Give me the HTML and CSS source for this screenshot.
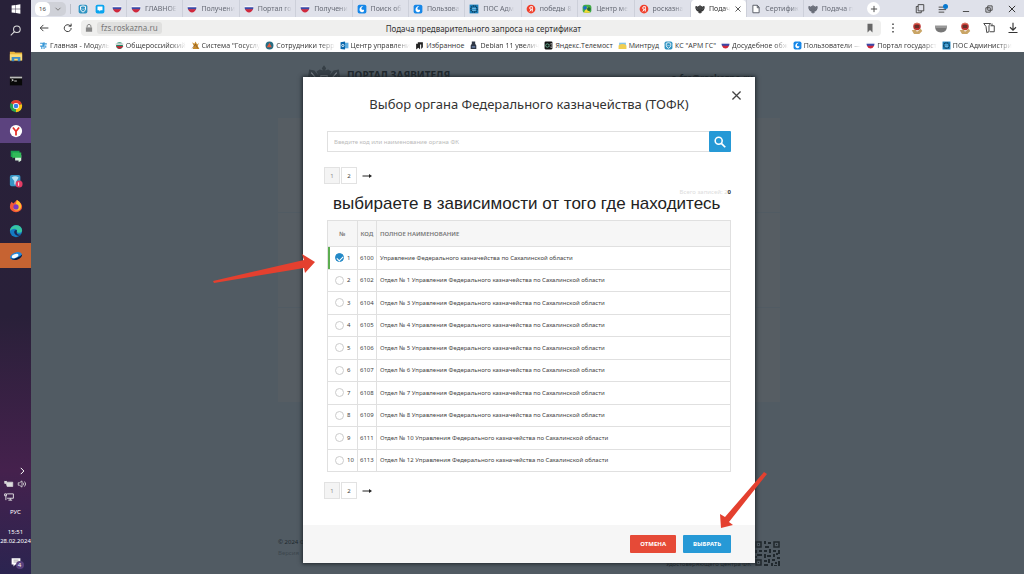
FILE: index.html
```html
<!DOCTYPE html>
<html lang="ru">
<head>
    <meta charset="UTF-8">
    <meta name="viewport" content="width=device-width, initial-scale=1.0">
    <title>Подача предварительного запроса на сертификат</title>
    <link rel="stylesheet" href="styles.css">
</head>
<body>
    <svg class="sprite" aria-hidden="true">
        <symbol id="flag" viewBox="0 0 16 16">
            <path d="M1 3h14v3H1z" fill="#f4f4f8"/>
            <path d="M1 5h14q0 2-1 4H2Q1 7 1 5z" fill="#3b4aa8"/>
            <path d="M1.600 8.500h12.800q-2 5-6.400 5t-6.400-5z" fill="#d0283c"/>
        </symbol>
        <symbol id="wave" viewBox="0 0 16 16">
            <rect x="1" y="1" width="14" height="14" rx="3" fill="#1687e8"/>
            <path d="M10 3c-4 0-6 3-6 6 0 2 2 4 4 4 3 0 4-3 3-4-2 1-4 0-4-2s2-3 3-4z" fill="#fff"/>
        </symbol>
        <symbol id="gear" viewBox="0 0 16 16">
            <rect x="1" y="1" width="14" height="14" fill="#1a81bd"/>
            <circle cx="8" cy="8" r="5" fill="none" stroke="#10364f" stroke-width="2" stroke-dasharray="2 1"/>
            <path d="M5 7h6M5 10h6" stroke="#bfe4f7"/>
        </symbol>
        <symbol id="ya" viewBox="0 0 16 16">
            <circle cx="8" cy="8" r="7" fill="#f0402c"/>
            <path d="M10 12V4H8.500Q6 4 6 6.300T8.500 9H10M8 9l-2 3" fill="none" stroke="#fff" stroke-width="1.600"/>
        </symbol>
        <symbol id="eagle" viewBox="0 0 32 32">
            <path d="M16 2l2 3-1 2 3-1 3 2-2 4 4-5 5-1 1 7-3 7-5 4-3 1 2 4-4-1-2 4-2-4-4 1 2-4-3-1-5-4-3-7 1-7 5 1 4 5-2-4 3-2 3 1-1-2z" fill="currentColor"/>
            <path d="M4 9l6 7M3 13l7 6M28 9l-6 7M29 13l-7 6M13 12h6v6l-3 3-3-3z" fill="none" stroke="#8a9097"/>
        </symbol>
        <symbol id="shield" viewBox="0 0 16 16">
            <rect x="1" y="1" width="14" height="14" rx="3" fill="#2f93c2"/>
            <path d="M8 3l4 1v4q0 3-4 5-4-2-4-5V4z" fill="none" stroke="#fff" stroke-width="1.500"/>
            <path d="M6 7l2 2 2-2" fill="none" stroke="#fff"/>
        </symbol>
        <symbol id="chat" viewBox="0 0 16 16">
            <rect x="1" y="1" width="14" height="14" rx="3" fill="#09a4ef"/>
            <path d="M4 4h8v6H9l-2 2v-2H4z" fill="#fff"/>
        </symbol>
        <symbol id="map" viewBox="0 0 16 16">
            <rect x="1" y="1" width="14" height="13" rx="4" fill="#42ad48"/>
            <path d="M3 14l5-10 5 10z" fill="#f5d936"/>
            <circle cx="5" cy="6" r="3" fill="#1c6ecb"/><circle cx="11" cy="8" r="3" fill="#216b32"/>
        </symbol>
        <symbol id="page" viewBox="0 0 16 16">
            <path d="M3 2h7l3 3v9H3zM10 2v4h3" fill="#fff" stroke="#565b64" stroke-width="1.500"/>
        </symbol>
        <symbol id="lens" viewBox="0 0 16 16">
            <circle cx="6.500" cy="6.500" r="4" fill="none" stroke="currentColor" stroke-width="1.800"/>
            <path d="M9.500 9.500l4.500 4.500" stroke="currentColor" stroke-width="2"/>
        </symbol>
        <symbol id="close" viewBox="0 0 16 16">
            <path d="M3 3l10 10M13 3L3 13" stroke="currentColor" stroke-width="1.600"/>
        </symbol>
        <symbol id="arrow" viewBox="0 0 20 8">
            <path d="M1 4h15" stroke="#222" stroke-width="2"/>
            <path d="M14 0l6 4-6 4z" fill="#222"/>
        </symbol>
        <symbol id="medal" viewBox="0 0 16 16">
            <circle cx="8" cy="6" r="5" fill="#be3030"/>
            <path d="M5 4h6v4H5z" fill="#68302a"/>
            <path d="M1 11l5-1 2 3 5-4 2 3-4 4H4z" fill="#c9a566"/>
            <path d="M4 3q4-3 8 0" fill="none" stroke="#e49a7b"/>
        </symbol>
    </svg>

    <nav class="taskbar" aria-label="Панель задач">
        <div class="task-list">
            <button class="task" aria-label="Пуск"><svg viewBox="0 0 16 16"><path d="M3 4l4.500-.6V7.600H3zM8 3.300l5-.8v5.100H8zM3 8.200h4.500v4.300L3 12zM8 8.200h5v5.200l-5-.8z" fill="#fff"/></svg></button>
            <button class="task" aria-label="Поиск"><svg viewBox="0 0 16 16"><circle cx="9" cy="6" r="3.800" fill="none" stroke="#ddd" stroke-width="1.200"/><path d="M6 9l-4 4" stroke="#ddd" stroke-width="1.200"/></svg></button>
            <button class="task" aria-label="Проводник"><svg viewBox="0 0 16 16"><path d="M1 3h5l1 1h8v9H1z" fill="#e9b53a"/><path d="M1 6h14v7H1z" fill="#fadb74"/><path d="M3 9h10v5h-3v-3H6v3H3z" fill="#3e8dc6"/></svg></button>
            <button class="task" aria-label="Командная строка"><svg viewBox="0 0 16 16"><path d="M1 3h14v10H1z" fill="#080808"/><path d="M1 3h14v2H1z" fill="#bbb"/><path d="M3 6l2 1-2 1M6 8h3" stroke="#ddd" fill="none"/></svg></button>
            <button class="task" aria-label="Chrome"><svg viewBox="0 0 16 16"><circle cx="8" cy="8" r="7" fill="#2ba24c"/><path d="M8 8L2 4.500A7 7 0 0 1 14.700 6z" fill="#e33b2e"/><path d="M8 8l6.700-2A7 7 0 0 1 8 15z" fill="#fbc116"/><circle cx="8" cy="8" r="3.500" fill="#fff"/><circle cx="8" cy="8" r="2.700" fill="#357de8"/></svg></button>
            <button class="task task-active" aria-label="Яндекс Браузер"><svg viewBox="0 0 16 16"><circle cx="8" cy="8" r="7" fill="#fff"/><path d="M4.500 4L8 8.500 11.500 4M8 8v5" fill="none" stroke="#e52e28" stroke-width="2"/></svg></button>
            <button class="task" aria-label="Сообщения"><svg viewBox="0 0 16 16"><path d="M7 7h7v6l-3 2v-2H7z" fill="#d6f0dc"/><path d="M2 2h10v7H6l-2 2V9H2z" fill="#1b9f50"/><path d="M4 4h10v6H4z" fill="#31bb58"/></svg></button>
            <button class="task" aria-label="Сервис"><svg viewBox="0 0 16 16"><rect x="1" y="1" width="12" height="13" rx="2" fill="#3796c5"/><path d="M3 4q4-3 8 0L8 9v3H6V8z" fill="#b8e1f0"/><circle cx="11.500" cy="11.500" r="4" fill="#e43c65"/><path d="M11 9.500v4" stroke="#fff"/></svg></button>
            <button class="task" aria-label="Firefox"><svg viewBox="0 0 16 16"><path d="M3 3l2 2 4-4c4 2 6 5 6 8a7 6 0 0 1-14 0q0-4 2-6z" fill="#f45939"/><path d="M9 1c5 3 6 7 4 10-2 3-6 3-8 0l3-6z" fill="#ffc22e"/><circle cx="8" cy="9" r="3" fill="#7b3ac3"/></svg></button>
            <button class="task" aria-label="Edge"><svg viewBox="0 0 16 16"><circle cx="8" cy="8" r="7" fill="#147bc3"/><path d="M1 8C2 0 14-1 15 7c0 3-4 4-6 2 1-4-4-5-8-1z" fill="#37c5a2"/><path d="M9 7c-3-1-5 4 0 6 2 1 4 0 5-1-4 1-6-1-5-5z" fill="#1b2754"/></svg></button>
            <button class="task task-orange" aria-label="Просмотр"><svg viewBox="0 0 16 16"><ellipse cx="8" cy="8" rx="7" ry="4" transform="rotate(-20 8 8)" fill="#2389dc"/><path d="M1 10q3 2 8 0t6-4q0 4-5 6t-9-2z" fill="#071d43"/><ellipse cx="7" cy="8" rx="4" ry="2" transform="rotate(-20 7 8)" fill="#f5fbff"/></svg></button>
        </div>
        <div class="tray">
            <svg class="tray-more" viewBox="0 0 16 16"><path d="M6 3l5 5-5 5" fill="none" stroke="#fff" stroke-width="1.600"/></svg>
            <div class="tray-row">
                <svg viewBox="0 0 16 16"><path d="M3 5h11v7H5zM1 3v4h3V3" fill="#ddd" stroke="#ddd"/></svg>
                <svg viewBox="0 0 16 16"><path d="M2 6h2l4-3v10L4 10H2zM10 6q2 2 0 4M12 4q4 4 0 8" fill="none" stroke="#ddd" stroke-width="1.300"/></svg>
            </div>
            <svg class="tray-net" viewBox="0 0 16 16"><path d="M5 3h10v7H5M10 10v3M7 13h6M1 3h3v3H1zM3 6v7" fill="none" stroke="#eee" stroke-width="1.400"/></svg>
            <span class="lang">РУС</span>
            <time class="clock">15:51<br>28.02.2024</time>
            <div class="notify">
                <svg viewBox="0 0 16 16"><path d="M1 2h14v10H7l-3 3v-3H1z" fill="#fff"/><path d="M4 5h8M4 8h8" stroke="#777"/></svg>
                <span>4</span>
            </div>
        </div>
    </nav>

    <div class="browser">
        <header class="chrome">
            <div class="tabbar">
                <div class="tab-count"><b>16</b><svg viewBox="0 0 16 16"><path d="M4 6l4 4 4-4" fill="none" stroke="#777" stroke-width="1.500"/></svg></div>
                <div class="pinned">
                    <svg><use href="#shield"/></svg>
                    <svg><use href="#chat"/></svg>
                    <svg><use href="#flag"/></svg>
                </div>
                <div class="tabs">
                    <a class="tab" href="#"><svg><use href="#flag"/></svg><span>ГЛАВНОЕ</span></a>
                    <a class="tab" href="#"><svg><use href="#flag"/></svg><span>Получени</span></a>
                    <a class="tab" href="#"><svg><use href="#flag"/></svg><span>Портал го</span></a>
                    <a class="tab" href="#"><svg><use href="#flag"/></svg><span>Получени</span></a>
                    <a class="tab" href="#"><svg><use href="#wave"/></svg><span>Поиск об</span></a>
                    <a class="tab" href="#"><svg><use href="#wave"/></svg><span>Пользова</span></a>
                    <a class="tab" href="#"><svg><use href="#gear"/></svg><span>ПОС Адм</span></a>
                    <a class="tab" href="#"><svg><use href="#ya"/></svg><span>победы 8</span></a>
                    <a class="tab" href="#"><svg><use href="#map"/></svg><span>Центр ме</span></a>
                    <a class="tab" href="#"><svg><use href="#ya"/></svg><span>росказна</span></a>
                    <a class="tab tab-current" href="#"><svg><use href="#eagle"/></svg><span>Подач</span><svg class="tab-close"><use href="#close"/></svg></a>
                    <a class="tab" href="#"><svg><use href="#page"/></svg><span>Сертифик</span></a>
                    <a class="tab" href="#"><svg><use href="#eagle"/></svg><span>Подача п</span></a>
                </div>
                <button class="new-tab" aria-label="Новая вкладка"><svg viewBox="0 0 16 16"><path d="M8 3v10M3 8h10" stroke="#444" stroke-width="1.500"/></svg></button>
                <div class="window-buttons">
                    <button aria-label="Копии"><svg viewBox="0 0 16 16"><path d="M5 1h9v10H5zM5 4H2v10h8v-3" fill="none" stroke="#444" stroke-width="1.500"/></svg></button>
                    <button aria-label="Меню"><svg viewBox="0 0 16 16"><path d="M1 5h8M1 9h12M1 13h9" stroke="#444" stroke-width="1.500"/><circle cx="12" cy="4" r="4" fill="#0879cf"/></svg></button>
                    <button aria-label="Свернуть"><svg viewBox="0 0 16 16"><path d="M3 12h10" stroke="#444" stroke-width="1.500"/></svg></button>
                    <button aria-label="Развернуть"><svg viewBox="0 0 16 16"><path d="M6 3h7v7H6zM3 6h7v7H3z" fill="none" stroke="#444" stroke-width="1.500"/></svg></button>
                    <button aria-label="Закрыть окно"><svg><use href="#close"/></svg></button>
                </div>
            </div>

            <div class="address-row">
                <button aria-label="Назад"><svg viewBox="0 0 16 16"><path d="M15 8H2M7 3L2 8l5 5" fill="none" stroke="#333" stroke-width="1.500"/></svg></button>
                <button aria-label="Обновить"><svg viewBox="0 0 16 16"><path d="M13 8a5.500 5.500 0 1 1-2-4l2 1M13 1v4H9" fill="none" stroke="#333" stroke-width="1.500"/></svg></button>
                <div class="address">
                    <svg class="lock" viewBox="0 0 16 16"><path d="M3 7h10v7H3z" fill="#888"/><path d="M5 7V4q3-4 6 0v3" fill="none" stroke="#888" stroke-width="1.600"/></svg>
                    <span class="host">fzs.roskazna.ru</span>
                    <span class="page-title">Подача предварительного запроса на сертификат</span>
                    <svg class="mark" viewBox="0 0 16 16"><path d="M4 1h8v14l-4-4-4 4z" fill="#666"/></svg>
                </div>
                <div class="tools">
                    <button aria-label="Ещё"><svg viewBox="0 0 16 16"><path d="M8 2v2M8 7v2M8 12v2" stroke="#444" stroke-width="2"/></svg></button>
                    <button aria-label="Расширение 1"><svg><use href="#medal"/></svg></button>
                    <button aria-label="Расширение 2"><svg viewBox="0 0 16 16"><path d="M0 5h16q0 9-8 9T0 5z" fill="#777"/><path d="M0 5h16v3H0z" fill="#999"/></svg></button>
                    <button aria-label="Расширение 3"><svg><use href="#medal"/></svg></button>
                    <button aria-label="Коллекции"><svg viewBox="0 0 16 16"><path d="M1 2h9l-2 3v8L5 14 4 6zM10 5h5v8H9M12 2v3" fill="none" stroke="#444" stroke-width="1.300"/></svg></button>
                    <button aria-label="Загрузки"><svg viewBox="0 0 16 16"><path d="M8 1v9M4 7l4 4 4-4M2 14h12" fill="none" stroke="#333" stroke-width="1.500"/></svg></button>
                </div>
            </div>

            <nav class="bookmarks" aria-label="Закладки">
                <a href="#"><svg viewBox="0 0 16 16"><path d="M2 4h5v5H2M9 2v12M9 5h5M5 9v5M12 8v4" fill="none" stroke="#3998d7" stroke-width="2"/></svg><span class="fade">Главная - Модуль</span></a>
                <a href="#"><svg viewBox="0 0 16 16"><circle cx="8" cy="8" r="6" fill="#1c8b6b"/><path d="M1 4h14v3H1z" fill="#ddd"/><path d="M2 9h13q-3 5-7 5T2 9z" fill="#b92e38"/></svg><span class="fade">Общероссийский</span></a>
                <a href="#"><svg viewBox="0 0 16 16"><path d="M2 2l4 3 2-4 3 5 3-3-2 6 3 5H3l2-5z" fill="#c68b2c"/><path d="M2 13l6-7 4 7" stroke="#6f4421" fill="none"/></svg><span class="fade">Система "Госуслу</span></a>
                <a href="#"><svg viewBox="0 0 16 16"><circle cx="8" cy="8" r="7" fill="#276d84"/><path d="M3 11l5-8 4 8z" fill="#e15a3e"/></svg><span class="fade">Сотрудники терр</span></a>
                <a href="#"><svg viewBox="0 0 16 16"><path d="M6 3h9v10H6z" fill="#5eade0"/><path d="M1 2l8-1v14l-8-1z" fill="#0767ad"/><circle cx="5" cy="8" r="2" fill="none" stroke="#fff" stroke-width="1.500"/></svg><span class="fade">Центр управлени</span></a>
                <a href="#"><svg viewBox="0 0 16 16"><path d="M5 2h9v9l-3 3V6H5zM2 5h7v10l-3-3-4 3z" fill="#222"/></svg><span>Избранное</span></a>
                <a href="#"><svg viewBox="0 0 16 16"><path d="M5 1h6v4l2 3v6H3V8l2-3z" fill="#303846"/><path d="M5 9h6v3H5z" fill="#657aa0"/></svg><span class="fade">Debian 11 увелич</span></a>
                <a href="#"><svg viewBox="0 0 16 16"><rect x="1" y="1" width="14" height="14" rx="2" fill="#111"/><circle cx="6" cy="8" r="3" fill="none" stroke="#69ba9d" stroke-width="1.500"/><path d="M10 6l4-2v8l-4-2" fill="none" stroke="#ddd"/></svg><span>Яндекс.Телемост</span></a>
                <a href="#"><svg viewBox="0 0 16 16"><path d="M2 3h12v9H2z" fill="#86c3e6"/><path d="M1 8q7-5 14 0v6H1z" fill="#f0ce51"/></svg><span>Минтруд</span></a>
                <a href="#"><svg><use href="#shield"/></svg><span>КС "АРМ ГС"</span></a>
                <a href="#"><svg><use href="#flag"/></svg><span class="fade">Досудебное обж</span></a>
                <a href="#"><svg><use href="#wave"/></svg><span class="fade">Пользователи —</span></a>
                <a href="#"><svg><use href="#flag"/></svg><span class="fade">Портал государст</span></a>
                <a href="#"><svg><use href="#gear"/></svg><span class="fade">ПОС Администри</span></a>
            </nav>
        </header>

        <main class="viewport">
            <div class="portal">
                <div class="portal-head">
                    <svg><use href="#eagle"/></svg>
                    <strong>ПОРТАЛ ЗАЯВИТЕЛЯ</strong>
                    <strong class="portal-mail">e-fzs@roskazna.ru</strong>
                </div>
                <div class="portal-cards">
                    <section></section>
                    <section></section>
                    <section></section>
                </div>
                <footer class="portal-foot">
                    <div><p>© 2024 Федеральное казначейство</p><p class="dim">Версия</p></div>
                    <p class="qr-note">Удостоверяющего центра ФК</p>
                    <svg class="qr" viewBox="0 0 25 25"><path d="M1 1h5v5H1zM19 1h5v5h-5zM1 19h5v5H1z" fill="none" stroke="#20282d" stroke-width="1.500"/><path d="M3 3h1v1H3zM21 3h1v1h-1zM3 21h1v1H3zM9 0h2v3H9zM13 1h3v2h-3zM10 5h4v2h-4zM9 9h3v2H9zM14 8h2v4h-2zM0 9h2v3H0zM4 9h3v2H4zM2 13h5v2H2zM0 15h2v2H0zM9 13h2v4H9zM12 14h4v2h-4zM18 9h3v2h-3zM23 9h2v4h-2zM18 13h2v3h-2zM21 12h2v2h-2zM22 16h3v2h-3zM9 19h3v2H9zM13 18h2v4h-2zM9 23h4v2H9zM17 18h3v2h-3zM16 22h2v3h-2zM20 21h2v2h-2zM23 20h2v5h-2zM19 24h3v1h-3z" fill="#20282d"/></svg>
                </footer>
            </div>

            <div class="overlay">
                <div class="modal" role="dialog" aria-labelledby="modalTitle">
                    <button class="modal-close" aria-label="Закрыть"><svg><use href="#close"/></svg></button>
                    <div class="modal-body">
                        <h1 id="modalTitle">Выбор органа Федерального казначейства (ТОФК)</h1>
                        <form class="search">
                            <input type="text" aria-label="Поиск органа" placeholder="Введите код или наименование органа ФК">
                            <button type="button" aria-label="Найти"><svg><use href="#lens"/></svg></button>
                        </form>
                        <div class="pager">
                            <button class="on">1</button>
                            <button>2</button>
                            <a href="#" aria-label="Вперёд"><svg><use href="#arrow"/></svg></a>
                        </div>
                        <p class="total"><span>Всего записей: 2</span><b>0</b></p>
                        <p class="note">выбираете в зависимости от того где находитесь</p>
                        <table class="organs">
                            <thead>
                                <tr><th class="num">№</th><th class="code">КОД</th><th>ПОЛНОЕ НАИМЕНОВАНИЕ</th></tr>
                            </thead>
                            <tbody>
                                <tr class="selected"><td><label><input type="radio" name="organ" checked>1</label></td><td class="code">6100</td><td>Управление Федерального казначейства по Сахалинской области</td></tr>
                                <tr><td><label><input type="radio" name="organ">2</label></td><td class="code">6102</td><td>Отдел № 1 Управления Федерального казначейства по Сахалинской области</td></tr>
                                <tr><td><label><input type="radio" name="organ">3</label></td><td class="code">6104</td><td>Отдел № 3 Управления Федерального казначейства по Сахалинской области</td></tr>
                                <tr><td><label><input type="radio" name="organ">4</label></td><td class="code">6105</td><td>Отдел № 4 Управления Федерального казначейства по Сахалинской области</td></tr>
                                <tr><td><label><input type="radio" name="organ">5</label></td><td class="code">6106</td><td>Отдел № 5 Управления Федерального казначейства по Сахалинской области</td></tr>
                                <tr><td><label><input type="radio" name="organ">6</label></td><td class="code">6107</td><td>Отдел № 6 Управления Федерального казначейства по Сахалинской области</td></tr>
                                <tr><td><label><input type="radio" name="organ">7</label></td><td class="code">6108</td><td>Отдел № 7 Управления Федерального казначейства по Сахалинской области</td></tr>
                                <tr><td><label><input type="radio" name="organ">8</label></td><td class="code">6109</td><td>Отдел № 8 Управления Федерального казначейства по Сахалинской области</td></tr>
                                <tr><td><label><input type="radio" name="organ">9</label></td><td class="code">6111</td><td>Отдел № 10 Управления Федерального казначейства по Сахалинской области</td></tr>
                                <tr><td><label><input type="radio" name="organ">10</label></td><td class="code">6113</td><td>Отдел № 12 Управления Федерального казначейства по Сахалинской области</td></tr>
                            </tbody>
                        </table>
                        <div class="pager pager-bottom">
                            <button class="on">1</button>
                            <button>2</button>
                            <a href="#" aria-label="Вперёд"><svg><use href="#arrow"/></svg></a>
                        </div>
                    </div>
                    <div class="modal-foot">
                        <button class="btn btn-red">ОТМЕНА</button>
                        <button class="btn btn-blue">ВЫБРАТЬ</button>
                    </div>
                    <svg class="pointer pointer-row" viewBox="0 0 102 30"><path d="M0 27L91 6 89 0l13 8-10 11-1-5L1 29z" fill="#e4402f"/></svg>
                    <svg class="pointer pointer-btn" viewBox="0 0 48 58"><path d="M45 1L6 46l-5-3 1 14 12-3-4-3L48 3z" fill="#e4402f"/></svg>
                </div>
            </div>
        </main>
    </div>
</body>
</html>
```
FILE: styles.css
```css
* {
    box-sizing: border-box;
}

body {
    margin: 0;
    display: flex;
    height: 100vh;
    overflow: hidden;
    font-family: "Noto Sans", "Open Sans", sans-serif;
    font-size: 6px;
    color: #444;
}

button {
    padding: 0;
    border: none;
    background: none;
    font: inherit;
    color: inherit;
    display: flex;
    align-items: center;
    justify-content: center;
    cursor: pointer;
}

a {
    color: inherit;
    text-decoration: none;
}

p {
    margin: 0;
}

svg {
    display: block;
    flex: none;
}

.sprite {
    position: absolute;
    width: 0;
    height: 0;
}

/* taskbar */
.taskbar {
    width: 31px;
    flex: none;
    display: flex;
    flex-direction: column;
    justify-content: space-between;
    background: linear-gradient(#282139, #292039 55%, #45214d 82%, #2b2450);
    color: #fff;
}

.task {
    width: 100%;
    height: 25px;
}

.task:first-child {
    height: 18px;
}

.task svg {
    width: 14px;
    height: 14px;
}

.task-active {
    background: #5c437f;
}

.task-orange {
    background: #c66332;
}

.tray {
    display: flex;
    flex-direction: column;
    align-items: center;
    padding-bottom: 7px;
}

.tray svg {
    width: 10px;
    height: 10px;
}

.tray-more {
    align-self: flex-end;
    margin-right: 4px;
}

.tray-row {
    display: flex;
    gap: 3px;
    margin-top: 3px;
}

.tray-net {
    align-self: flex-start;
    margin: 3px 0 5px 4px;
}

.lang {
    line-height: 10px;
}

.clock {
    margin-top: 11px;
    line-height: 9px;
    text-align: center;
}

.notify {
    position: relative;
    margin-top: 11px;
}

.notify span {
    position: absolute;
    left: 5px;
    top: 4px;
    width: 8px;
    height: 8px;
    border-radius: 50%;
    background: #59417e;
    line-height: 8px;
    text-align: center;
}

/* browser */
.browser {
    flex: 1;
    min-width: 0;
    display: flex;
    flex-direction: column;
}

.chrome {
    background: #fff;
    color: #333;
}

.tabbar {
    display: flex;
    align-items: center;
    height: 17px;
    padding: 0 7px 0 4px;
    background: #dfe1ea;
}

.tabbar svg {
    width: 10px;
    height: 10px;
}

.tab-count {
    display: flex;
    align-items: center;
    gap: 3px;
    height: 14px;
    padding-right: 3px;
    border-radius: 5px;
    background: #cfd1d8;
}

.tab-count b {
    width: 15px;
    line-height: 14px;
    border-radius: 5px;
    background: #fff;
    text-align: center;
    font-weight: 400;
}

.pinned {
    display: flex;
    gap: 7px;
    margin-left: 4px;
    padding: 0 4px 0 7px;
    border-left: 1px solid #bbbec8;
}

.tabs {
    flex: 1;
    min-width: 0;
    display: flex;
    height: 100%;
}

.tab {
    flex: 1 1 0;
    min-width: 0;
    display: flex;
    align-items: center;
    gap: 4px;
    padding: 0 0 0 4px;
    border-left: 1px solid #cdd0da;
    font-size: 7px;
    white-space: nowrap;
    color: #666a75;
}

.tab span,
.fade {
    mask-image: linear-gradient(90deg, #000 75%, transparent);
}

.tab-current {
    border-radius: 4px 4px 0 0;
    background: #fff;
    color: #333;
}

.tabbar .tab-close {
    width: 8px;
    height: 8px;
}

.new-tab {
    width: 13px;
    height: 13px;
    margin: 0 35px 0 8px;
    border-radius: 50%;
    background: #fff;
}

.window-buttons {
    display: flex;
    gap: 13px;
}

.address-row {
    display: flex;
    align-items: center;
    height: 22px;
    padding: 0 5px 0 8px;
    gap: 14px;
}

.address-row svg {
    width: 10px;
    height: 10px;
}

.address {
    flex: 1;
    display: flex;
    align-items: center;
    height: 16px;
    margin-left: -6px;
    padding: 0 6px 0 3px;
    border-radius: 4px;
    background: #efefee;
}

.host {
    margin-left: 3px;
    padding: 0 4px;
    border-radius: 3px;
    background: #e0e0df;
    font-size: 8px;
    line-height: 12px;
    color: #777;
}

.page-title {
    flex: 1;
    padding-right: 60px;
    font-size: 8px;
    text-align: center;
}

.address-row .tools {
    display: flex;
    gap: 12px;
    margin-left: -8px;
}

.tools svg {
    width: 12px;
    height: 12px;
}

.bookmarks {
    display: flex;
    justify-content: space-between;
    height: 13px;
    padding: 0 12px 0 8px;
    font-family: "Open Sans", "Noto Sans", sans-serif;
    font-size: 7px;
    white-space: nowrap;
}

.bookmarks a {
    display: flex;
    align-items: center;
    gap: 2px;
    line-height: 12px;
}

.bookmarks svg {
    width: 9px;
    height: 9px;
}

/* page under the dialog */
.viewport {
    position: relative;
    flex: 1;
    min-height: 0;
    padding-left: 3px;
    background: #515b63;
}

.portal {
    width: 502px;
    height: 100%;
    margin: 0 auto;
    display: flex;
    flex-direction: column;
    color: #20282d;
}

.portal-head {
    display: flex;
    align-items: center;
    gap: 6px;
    padding: 11px 27px 0 29px;
    font-size: 10px;
}

.portal-head svg {
    width: 34px;
    height: 34px;
    color: #363f46;
}

.portal-head strong {
    margin-bottom: 10px;
}

.portal-mail {
    margin-left: auto;
    padding-top: 5px;
    font-size: 9px;
}

.portal-cards {
    flex: 1;
    display: flex;
    flex-direction: column;
    padding: 21px 0 134px;
}

.portal-cards section {
    flex: 1;
    border-bottom: 1px solid #515b63;
    background: #565d63;
}

.portal-foot {
    display: flex;
    align-items: flex-end;
    padding-bottom: 8px;
    line-height: 11px;
}

.portal-foot div {
    margin-bottom: 7px;
}

.dim {
    color: #3c464d;
}

.qr-note {
    margin-left: auto;
    margin-right: 4px;
    margin-bottom: -4px;
}

.qr {
    width: 25px;
    height: 25px;
}

/* dialog */
.overlay {
    position: absolute;
    inset: 0;
    display: flex;
    align-items: flex-start;
    justify-content: center;
    padding: 25px 0 0 3px;
}

.modal {
    position: relative;
    width: 452px;
    background: #fff;
    box-shadow: 0 0 4px 1px #20282d;
}

.modal-close {
    position: absolute;
    top: 12px;
    right: 12px;
}

.modal-close svg {
    width: 13px;
    height: 13px;
}

.modal-body {
    padding: 18px 24px 26px;
}

.modal h1 {
    margin: 0 0 18px;
    font-size: 13px;
    font-weight: 400;
    line-height: 18px;
    text-align: center;
    color: #333;
}

.search {
    display: flex;
    height: 21px;
}

.search input {
    flex: 1;
    min-width: 0;
    padding: 0 6px;
    border: 1px solid #e0e0e0;
    border-right: none;
    font: inherit;
}

.search input::placeholder {
    color: #bbb;
}

.search button {
    width: 22px;
    border-radius: 1px;
    background: #2699d6;
    color: #fff;
}

.search svg {
    width: 14px;
    height: 14px;
}

.pager {
    display: flex;
    align-items: center;
    gap: 1px;
    margin: 15px 0 0 -3px;
}

.pager button {
    width: 16px;
    height: 17px;
    border: 1px solid #e2e2e2;
}

.pager .on {
    background: #f4f4f4;
    color: #888;
}

.pager svg {
    width: 10px;
    height: 4px;
    margin-left: 4px;
}

.total {
    display: flex;
    justify-content: flex-end;
    margin-top: 4px;
    line-height: 8px;
    color: #333;
}

.total span {
    color: #ddd;
}

.note {
    margin-bottom: 8px;
    padding-left: 6px;
    font-family: "Liberation Sans", Arial, sans-serif;
    font-size: 17px;
    line-height: 16px;
    white-space: nowrap;
    color: #222;
}

.organs {
    width: 100%;
    height: 252px;
    border-collapse: collapse;
}

.organs th,
.organs td {
    padding: 0 3px;
    border: 1px solid #e0e0e0;
    text-align: left;
    line-height: 8px;
}

.organs th {
    height: 26px;
    background: #f6f6f6;
    font-weight: 600;
    color: #777;
}

.organs td {
    height: 22px;
}

.organs .num {
    width: 29px;
    text-align: center;
}

.organs .code {
    width: 19px;
    padding: 0 2px;
    text-align: center;
}

.organs label {
    display: flex;
    align-items: center;
    gap: 3px;
    padding-left: 4px;
}

.organs input {
    appearance: none;
    flex: none;
    width: 9px;
    height: 9px;
    margin: 0;
    border: 1px solid #ccc;
    border-radius: 50%;
}

.organs input:checked {
    display: grid;
    place-items: center;
    border-color: #2389c7;
    background: #2389c7;
}

.organs input:checked::before {
    content: "";
    width: 5px;
    height: 3px;
    border-left: 1px solid #fff;
    border-bottom: 1px solid #fff;
    transform: rotate(-45deg);
}

.organs .selected td:first-child {
    box-shadow: inset 2px 0 #5cad50;
}

.pager-bottom {
    margin-top: 10px;
}

.modal-foot {
    display: flex;
    justify-content: flex-end;
    gap: 7px;
    padding: 10px 24px;
    background: #f6f6f6;
}

.btn {
    min-width: 45px;
    height: 18px;
    padding: 0 10px;
    border-radius: 1px;
    font-weight: 700;
    color: #fff;
}

.btn-red {
    background: #e64a37;
}

.btn-blue {
    background: #2699d6;
}

/* red arrows over the dialog */
.pointer {
    position: absolute;
    pointer-events: none;
}

.pointer-row {
    left: -90px;
    top: 177px;
    width: 102px;
    height: 30px;
}

.pointer-btn {
    left: 416px;
    top: 394px;
    width: 48px;
    height: 58px;
}
```
